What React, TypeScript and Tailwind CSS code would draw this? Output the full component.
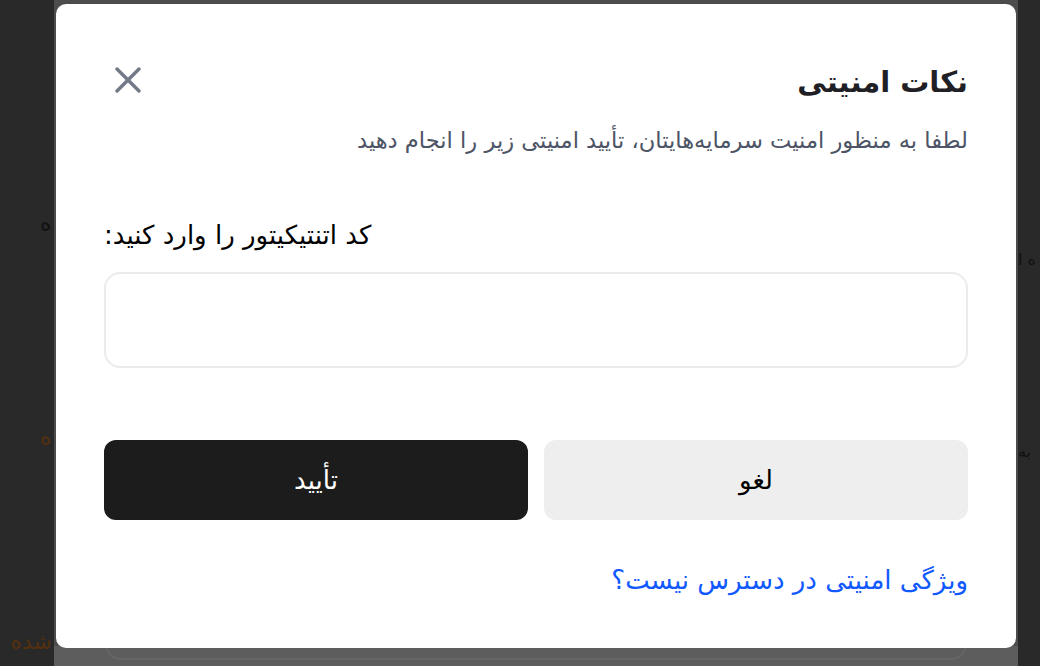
import React from 'react'

const FA = "font-['DejaVu_Sans',sans-serif]"

export default function App() {
  return (
    <div className={`flex h-[666px] w-[1040px] overflow-hidden bg-[#292929] ${FA}`}>
      {/* left strip of the page behind */}
      <div className="flex w-[54px] flex-col overflow-hidden text-[22px] leading-7">
        <span className="mt-[210px] pl-[40px] text-[#121212]">ه</span>
        <span className="mt-[186px] pl-[40px] text-[#53300f]">ه</span>
        <span className="mt-[176px] flex justify-end whitespace-nowrap pr-[2px] text-[22px] text-[#53300f]" dir="ltr">
          <span dir="rtl">شده</span>
        </span>
      </div>

      {/* center panel behind the dialog */}
      <div className="relative flex flex-1 flex-col justify-end bg-[#4c4c4c]">
        <div className="flex h-[20px] items-end bg-[#5d5d5d] px-[51px] pb-[6px]">
          <div className="h-[40px] w-full rounded-2xl border-2 border-[#666]" />
        </div>

        {/* dialog */}
        <div
          dir="rtl"
          className="absolute inset-x-[2px] top-[4px] flex h-[644px] flex-col rounded-[10px] bg-white px-12 pt-[58px]"
        >
          <div className="flex h-10 items-center justify-between">
            <h2 className="text-[29px] font-bold leading-10 text-[#1f2025]">نکات امنیتی</h2>
            <button className="mb-1 ml-[11px] text-[#727987]">
              <svg width="26" height="26" viewBox="0 0 26 26" fill="none" stroke="currentColor" strokeWidth="3.4" strokeLinecap="round">
                <path d="M2 2L24 24M24 2L2 24" />
              </svg>
            </button>
          </div>
          <p className="mt-6 text-[22.6px] leading-7 text-[#4d5466]">
            لطفا به منظور امنیت سرمایه‌هایتان، تأیید امنیتی زیر را انجام دهید
          </p>

          <label className="mt-[65px] block text-left text-[26px] leading-8 text-black">
            کد اتنتیکیتور را وارد کنید:
          </label>
          <input className="mt-[21px] h-24 w-full rounded-2xl border-2 border-[#ebebeb] px-4 text-[22px] outline-none" />

          <div className="mt-[72px] flex gap-4">
            <button className="h-20 flex-1 rounded-xl bg-[#eeeeee] text-[26px] text-black">لغو</button>
            <button className="h-20 flex-1 rounded-xl bg-[#1c1c1c] text-[26px] text-white">تأیید</button>
          </div>

          <a className="mt-[44px] self-start text-[26px] leading-8 text-[#1159ff]">ویژگی امنیتی در دسترس نیست؟</a>
        </div>
      </div>

      {/* right strip */}
      <div className="flex w-[22px] flex-col overflow-hidden text-[16px] leading-7 text-[#121212]">
        <span className="mt-[246px] whitespace-nowrap">ه ا</span>
        <span className="mt-[164px] whitespace-nowrap">به</span>
      </div>
    </div>
  )
}
